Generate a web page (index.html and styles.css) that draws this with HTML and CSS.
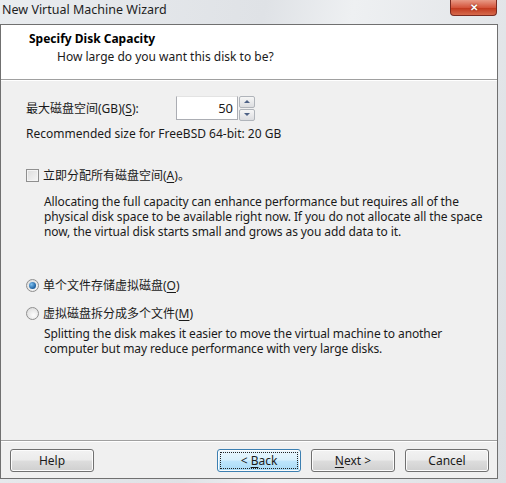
FILE: index.html
```html
<!DOCTYPE html>
<html lang="zh-CN">
	<head>
		<meta charset="UTF-8" />
		<title>New Virtual Machine Wizard</title>
		<link rel="stylesheet" href="styles.css">
	</head>

	<body>
		<div class="window">
			<div class="titlebar">
				<span class="title">New Virtual Machine Wizard</span>
				<span class="close">&#x2715;</span>
			</div>

			<div class="client">
				<div class="header">
					<div class="header-title">Specify Disk Capacity</div>
					<div class="header-sub">How large do you want this disk to be?</div>
				</div>

				<div class="content">
					<div class="size-row">
						<span class="size-label">最大磁盘空间(GB)(<u>S</u>):</span>
						<div class="spinner">
							<span class="spin-value">50</span>
							<div class="spin-buttons">
								<span class="spin-btn"><span class="arrow-up"></span></span>
								<span class="spin-btn"><span class="arrow-down"></span></span>
							</div>
						</div>
					</div>
					<div class="recommended">Recommended size for FreeBSD 64-bit: 20 GB</div>

					<label class="option check-row">
						<span class="checkbox"></span>
						<span>立即分配所有磁盘空间(<u>A</u>)。</span>
					</label>
					<p class="note">Allocating the full capacity can enhance performance but requires all of the physical disk space to be available right now. If you do not allocate all the space now, the virtual disk starts small and grows as you add data to it.</p>

					<label class="option radio-row first">
						<span class="radio checked"></span>
						<span>单个文件存储虚拟磁盘(<u>O</u>)</span>
					</label>
					<label class="option radio-row second">
						<span class="radio"></span>
						<span>虚拟磁盘拆分成多个文件(<u>M</u>)</span>
					</label>
					<p class="note note-split">Splitting the disk makes it easier to move the virtual machine to another computer but may reduce performance with very large disks.</p>
				</div>

				<div class="footer">
					<button class="btn">Help</button>
					<span class="spacer"></span>
					<button class="btn btn-focus"><span class="focus-ring"><span>&lt; <u>B</u>ack</span></span></button>
					<button class="btn"><u>N</u>ext &gt;</button>
					<button class="btn">Cancel</button>
				</div>
			</div>
		</div>
	</body>
</html>
```

FILE: styles.css
```css
html,
body {
	margin: 0;
	padding: 0;
}

body {
	width: 506px;
	height: 483px;
	overflow: hidden;
	font-family: "Noto Sans", "Noto Sans CJK SC", sans-serif;
	font-size: 12px;
	color: #1a1a1a;
	background: #dfe3e7;
}

u {
	text-decoration: underline;
	text-underline-offset: 2px;
}

.window {
	display: flex;
	flex-direction: column;
	height: 483px;
	background: linear-gradient(100deg, #e9ecef 0%, #dfe2e6 45%, #eef0f2 60%, #dcdfe3 100%);
}

/* title bar */
.titlebar {
	display: flex;
	justify-content: space-between;
	align-items: flex-start;
	height: 24px;
	flex: none;
}

.title {
	padding: 2px 0 0 2px;
	font-size: 12.5px;
	line-height: 16px;
	color: #1e1e1e;
}

.close {
	width: 45px;
	height: 15px;
	margin-right: 9px;
	border: 1px solid #7a2a20;
	border-top: none;
	border-radius: 0 0 4px 4px;
	background: linear-gradient(#e89a86 0%, #d4553c 50%, #c23a1f 55%, #d66a4c 100%);
	color: #fff;
	font-size: 10px;
	font-weight: bold;
	line-height: 14px;
	text-align: center;
	text-shadow: 0 0 2px #6b1c10;
}

/* client area */
.client {
	flex: 1;
	display: flex;
	flex-direction: column;
	margin: 0 8px 4px 0;
	border: 1px solid #707070;
	background: #f0f0f0;
}

.header {
	flex: none;
	height: 55px;
	box-sizing: border-box;
	padding: 6px 0 0 28px;
	background: #fff;
	border-bottom: 1px solid #a0a0a0;
}

.header-title {
	font-weight: bold;
	line-height: 16px;
	color: #000;
}

.header-sub {
	margin: 2px 0 0 28px;
	line-height: 16px;
}

.content {
	flex: 1;
	padding: 15px 0 0 25px;
	border-top: 1px solid #fff;
}

.size-row {
	display: flex;
	align-items: center;
	height: 24px;
}

.size-label {
	width: 150px;
}

.spinner {
	display: flex;
	align-items: center;
	height: 24px;
}

.spin-value {
	width: 56px;
	height: 22px;
	padding-right: 4px;
	border: 1px solid #abadb3;
	border-top-color: #e3e3e3;
	background: #fff;
	line-height: 22px;
	text-align: right;
	font-size: 13px;
}

.spin-buttons {
	display: flex;
	flex-direction: column;
	gap: 1px;
	margin-left: 1px;
}

.spin-btn {
	display: flex;
	align-items: center;
	justify-content: center;
	width: 14px;
	height: 10px;
	border: 1px solid #b0b4ba;
	border-radius: 2px;
	background: linear-gradient(#f6f6f6, #dcdde0);
}

.arrow-up,
.arrow-down {
	width: 0;
	height: 0;
	border-left: 3px solid transparent;
	border-right: 3px solid transparent;
}

.arrow-up {
	border-bottom: 3px solid #4d6185;
}

.arrow-down {
	border-top: 3px solid #4d6185;
}

.recommended {
	margin-top: 6px;
	line-height: 16px;
}

.option {
	display: flex;
	align-items: center;
	gap: 4px;
	height: 16px;
}

.check-row {
	margin-top: 25px;
}

.checkbox {
	width: 11px;
	height: 11px;
	border: 1px solid #8f8f8f;
	background: linear-gradient(135deg, #dcdcdc, #f6f6f6);
	box-shadow: inset 0 0 0 1px #f4f4f4;
}

.note {
	width: 448px;
	margin: 11px 0 0 18px;
	line-height: 15px;
	letter-spacing: -0.1px;
}

.radio-row.first {
	margin-top: 38px;
}

.radio-row.second {
	margin-top: 12px;
}

.radio {
	position: relative;
	width: 11px;
	height: 11px;
	border: 1px solid #8f8f8f;
	border-radius: 50%;
	background: radial-gradient(circle at 60% 65%, #fdfdfd, #d6d6d6);
}

.radio.checked::after {
	content: "";
	position: absolute;
	left: 2px;
	top: 2px;
	width: 7px;
	height: 7px;
	border-radius: 50%;
	background: radial-gradient(circle at 35% 35%, #7ec0f0, #1d5f9e 70%);
}

.note-split {
	margin-top: 5px;
}

.footer {
	display: flex;
	gap: 10px;
	flex: none;
	height: 38px;
	box-sizing: border-box;
	padding: 8px 8px 0 9px;
	border-top: 1px solid #a0a0a0;
	box-shadow: inset 0 1px 0 #fff;
}

.spacer {
	flex: 1;
}

.btn {
	width: 84px;
	height: 23px;
	padding: 0;
	border: 1px solid #707070;
	border-radius: 3px;
	background: linear-gradient(#f2f2f2 0%, #ebebeb 48%, #dddddd 52%, #cfcfcf 100%);
	box-shadow: inset 0 0 0 1px #fcfcfc;
	font: inherit;
	color: #1a1a1a;
}

.btn-focus {
	padding: 2px;
	border-color: #3c7fb1;
	background: linear-gradient(#eaf6fd 0%, #d9f0fc 48%, #bee6fd 52%, #a7d9f5 100%);
}

.focus-ring {
	display: flex;
	align-items: center;
	justify-content: center;
	height: 100%;
	box-sizing: border-box;
	border: 1px dotted #222;
}
```
